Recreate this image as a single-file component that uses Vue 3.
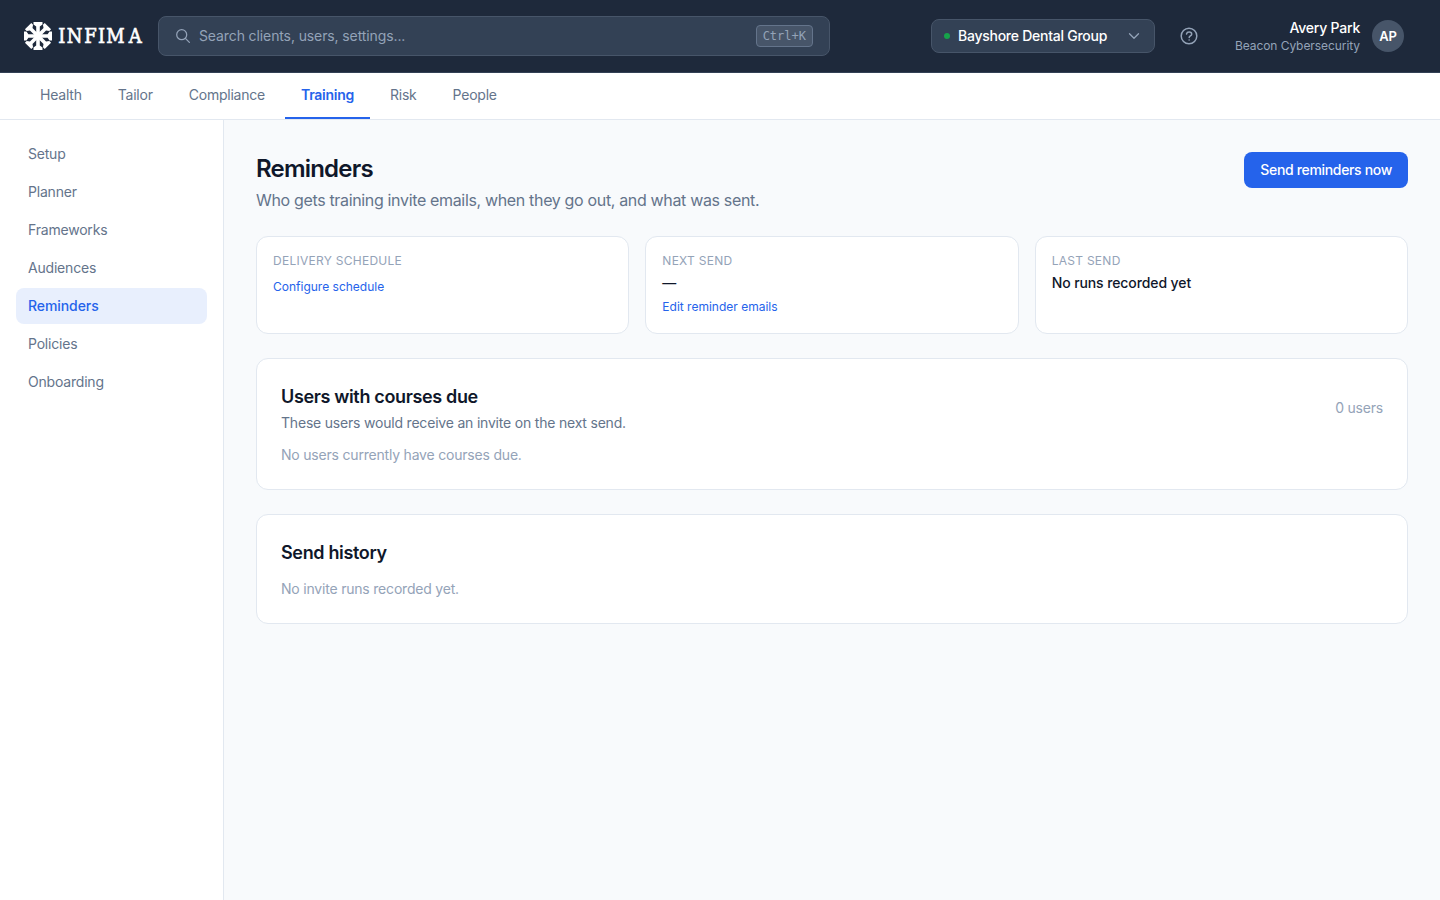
<script setup>
const tabs = ['Health', 'Tailor', 'Compliance', 'Training', 'Risk', 'People'];
const activeTab = 'Training';

const sections = ['Setup', 'Planner', 'Frameworks', 'Audiences', 'Reminders', 'Policies', 'Onboarding'];
const activeSection = 'Reminders';

const stats = [
    { label: 'Delivery schedule', link: 'Configure schedule' },
    { label: 'Next send', value: '—', link: 'Edit reminder emails' },
    { label: 'Last send', value: 'No runs recorded yet' },
];

const spokes = [0, 45, 90, 135, 180, 225, 270, 315];
</script>

<template>
    <div class="app">
        <header class="topbar">
            <svg class="logo" width="120" height="28" viewBox="0 0 120 28" aria-label="Infima">
                <path
                    v-for="a in spokes"
                    :key="a"
                    :transform="`rotate(${a} 14 14)`"
                    fill="#fff"
                    d="M12.2 14V4.4L9.5 2.5V0h9v2.5l-2.7 1.9V14z"
                />
                <text transform="scale(0.88 1)" x="39 48.5 68.6 84.1 93.5 119" y="21.4">INFIMA</text>
            </svg>

            <div class="search">
                <svg width="16" height="16" viewBox="0 0 16 16" fill="none" stroke="currentColor" stroke-width="1.25" stroke-linecap="round">
                    <circle cx="6.7" cy="6.7" r="5" />
                    <path d="M10.4 10.4l4 4" />
                </svg>
                <span class="search__hint">Search clients, users, settings...</span>
                <kbd>Ctrl+K</kbd>
            </div>

            <div class="topbar__right">
                <button class="client">
                    <span class="client__dot"></span>
                    <span class="client__name">Bayshore Dental Group</span>
                    <svg width="16" height="16" viewBox="0 0 16 16" fill="none" stroke="currentColor" stroke-width="1.3" stroke-linecap="round" stroke-linejoin="round">
                        <path d="M3.5 5.8L8 10.3l4.5-4.5" />
                    </svg>
                </button>
                <svg class="help" width="20" height="20" viewBox="0 0 20 20" fill="none" stroke="currentColor" stroke-width="1.5" stroke-linecap="round" stroke-linejoin="round">
                    <circle cx="10" cy="10" r="7.8" />
                    <path d="M7.5 8c.3-1.2 1.3-1.9 2.6-1.9 1.5 0 2.6.9 2.6 2.1 0 1.7-2.5 1.8-2.5 3.3" />
                    <path d="M10.1 13.9h.01" />
                </svg>
                <div class="user">
                    <div class="user__text">
                        <div class="user__name">Avery Park</div>
                        <div class="user__org">Beacon Cybersecurity</div>
                    </div>
                    <div class="avatar">AP</div>
                </div>
            </div>
        </header>

        <nav class="tabs">
            <a v-for="t in tabs" :key="t" class="tab" :class="{ 'tab--active': t === activeTab }">{{ t }}</a>
        </nav>

        <div class="body">
            <aside class="sidebar">
                <a
                    v-for="s in sections"
                    :key="s"
                    class="side-link"
                    :class="{ 'side-link--active': s === activeSection }"
                >{{ s }}</a>
            </aside>

            <main class="main">
                <div class="page-head">
                    <div>
                        <h1>Reminders</h1>
                        <p class="lead">Who gets training invite emails, when they go out, and what was sent.</p>
                    </div>
                    <button class="primary">Send reminders now</button>
                </div>

                <div class="stats">
                    <div v-for="s in stats" :key="s.label" class="stat">
                        <div class="stat__label">{{ s.label }}</div>
                        <div v-if="s.value" class="stat__value">{{ s.value }}</div>
                        <a v-if="s.link" class="stat__link">{{ s.link }}</a>
                    </div>
                </div>

                <section class="card">
                    <div class="card__head">
                        <div>
                            <h2>Users with courses due</h2>
                            <p class="card__sub">These users would receive an invite on the next send.</p>
                        </div>
                        <span class="muted">0 users</span>
                    </div>
                    <p class="muted card__empty">No users currently have courses due.</p>
                </section>

                <section class="card">
                    <h2>Send history</h2>
                    <p class="muted card__empty">No invite runs recorded yet.</p>
                </section>
            </main>
        </div>
    </div>
</template>

<style>
body {
    margin: 0;
    background: #f8fafc;
}
</style>

<style scoped>
.app {
    height: 100vh;
    display: flex;
    flex-direction: column;
    font-family: Inter, sans-serif;
    font-size: 14px;
    line-height: 20px;
    letter-spacing: -0.2px;
    color: #0f172a;
    overflow: hidden;
}
.app * {
    box-sizing: border-box;
}
h1,
h2,
p {
    margin: 0;
}
button {
    font: inherit;
    border: 0;
}

.topbar {
    height: 73px;
    flex: none;
    display: flex;
    align-items: center;
    padding: 0 36px 1px 24px;
    background: #1e293b;
    border-bottom: 1px solid #334155;
}
.logo {
    flex: none;
    margin-right: 14px;
}
.logo text {
    font-family: 'DejaVu Serif', serif;
    font-size: 20.4px;
    letter-spacing: 0;
    fill: #fff;
    stroke: #fff;
    stroke-width: 0.7px;
}
.search {
    width: 672px;
    height: 40px;
    display: flex;
    align-items: center;
    gap: 8px;
    padding: 0 16px;
    border: 1px solid #475569;
    border-radius: 8px;
    background: #334155;
    color: #94a3b8;
}
.search__hint {
    flex: 1;
    letter-spacing: -0.11px;
}
kbd {
    font-family: 'DejaVu Sans Mono', monospace;
    font-size: 12px;
    line-height: 16px;
    letter-spacing: 0;
    padding: 2px 6px;
    border: 1px solid #64748b;
    border-radius: 4px;
    background: #475569;
}
.topbar__right {
    margin-left: auto;
    display: flex;
    align-items: center;
}
.client {
    width: 224px;
    height: 34px;
    display: flex;
    align-items: center;
    padding: 0 12px;
    border: 1px solid #475569;
    border-radius: 8px;
    background: #334155;
    color: #94a3b8;
}
.client__dot {
    width: 6px;
    height: 6px;
    margin-right: 8px;
    border-radius: 50%;
    background: #16a34a;
}
.client__name {
    flex: 1;
    text-align: left;
    font-weight: 500;
    letter-spacing: -0.25px;
    color: #fff;
}
.help {
    margin-left: 24px;
    color: #94a3b8;
}
.user {
    display: flex;
    align-items: center;
    gap: 12px;
    margin-left: 36px;
}
.user__text {
    text-align: right;
}
.user__name {
    font-weight: 500;
    letter-spacing: -0.22px;
    color: #fff;
}
.user__org {
    font-size: 12px;
    line-height: 16px;
    letter-spacing: -0.07px;
    color: #94a3b8;
}
.avatar {
    width: 32px;
    height: 32px;
    display: grid;
    place-items: center;
    border-radius: 50%;
    background: #475569;
    color: #fff;
    font-weight: 600;
    font-size: 13px;
}

.tabs {
    height: 47px;
    flex: none;
    display: flex;
    gap: 4px;
    padding: 0 24px;
    background: #fff;
    border-bottom: 1px solid #e2e8f0;
}
.tab {
    padding: 12px 16px;
    border-bottom: 2px solid transparent;
    letter-spacing: -0.22px;
    color: #64748b;
}
.tab--active {
    color: #2563eb;
    font-weight: 600;
    letter-spacing: -0.28px;
    border-bottom-color: #2563eb;
}

.body {
    flex: 1;
    display: flex;
    background: #f8fafc;
}
.sidebar {
    width: 224px;
    flex: none;
    display: flex;
    flex-direction: column;
    gap: 2px;
    padding: 16px;
    background: #fff;
    border-right: 1px solid #e2e8f0;
}
.side-link {
    padding: 8px 12px;
    border-radius: 8px;
    color: #64748b;
}
.side-link--active {
    background: #e8effd;
    color: #2563eb;
    font-weight: 500;
    letter-spacing: -0.08px;
}

.main {
    flex: 1;
    padding: 32px;
}
.page-head {
    display: flex;
    justify-content: space-between;
    align-items: flex-start;
    margin-bottom: 24px;
}
h1 {
    padding-top: 1px;
    font-size: 24px;
    line-height: 32px;
    font-weight: 600;
    letter-spacing: -0.8px;
}
.lead {
    margin-top: 3px;
    font-size: 16px;
    line-height: 24px;
    letter-spacing: -0.34px;
    color: #64748b;
}
.primary {
    height: 36px;
    padding: 0 16px;
    border-radius: 8px;
    background: #2563eb;
    color: #fff;
    font-weight: 500;
    letter-spacing: -0.33px;
}
.stats {
    display: grid;
    grid-template-columns: repeat(3, 1fr);
    gap: 16px;
    margin-bottom: 24px;
}
.stat {
    height: 98px;
    padding: 16px;
    border: 1px solid #e2e8f0;
    border-radius: 12px;
    background: #fff;
}
.stat__label {
    font-size: 12px;
    line-height: 16px;
    letter-spacing: 0.27px;
    text-transform: uppercase;
    color: #94a3b8;
}
.stat__value {
    margin-top: 4px;
    font-weight: 500;
    letter-spacing: -0.1px;
}
.stat__link {
    display: block;
    margin-top: 6px;
    font-size: 12px;
    line-height: 16px;
    letter-spacing: 0;
    color: #2563eb;
}
.stat__label + .stat__link {
    margin-top: 10px;
}

.card {
    padding: 24px;
    border: 1px solid #e2e8f0;
    border-radius: 12px;
    background: #fff;
}
.card + .card {
    margin-top: 24px;
}
.card__head {
    display: flex;
    justify-content: space-between;
    align-items: center;
}
h2 {
    font-size: 18px;
    line-height: 28px;
    font-weight: 600;
    letter-spacing: -0.35px;
}
.card__sub {
    margin-top: 2px;
    color: #64748b;
}
.muted {
    color: #94a3b8;
}
.card__empty {
    margin-top: 12px;
}
</style>
